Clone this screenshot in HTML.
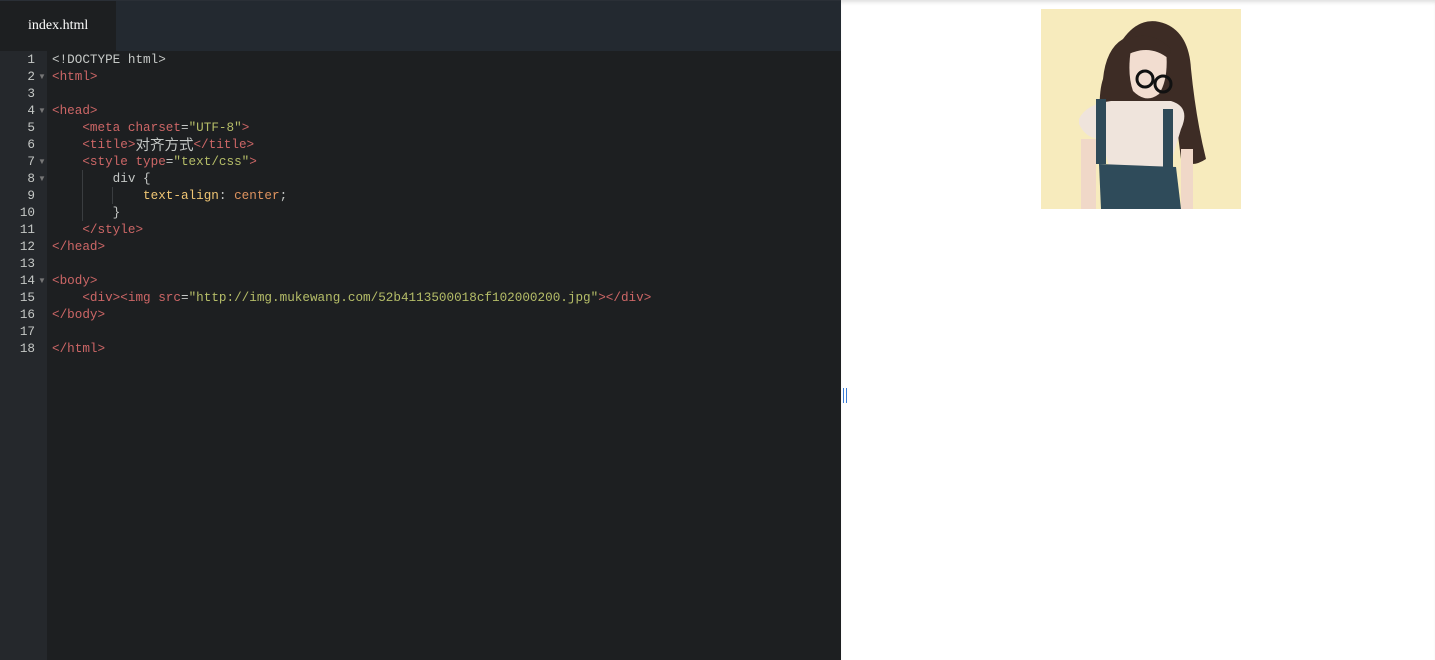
<!DOCTYPE html>
<html><head><meta charset="utf-8"><style>
*{margin:0;padding:0;box-sizing:border-box}
body{width:1435px;height:660px;overflow:hidden;background:#fff;position:relative;font-family:"Liberation Sans",sans-serif}
#ed{position:absolute;left:0;top:0;width:841px;height:660px;background:#1d1f21}
#tabs{position:absolute;left:0;top:0;width:841px;height:51px;background:#232930;border-top:1px solid #2a2f36}
#tab{position:absolute;left:0;top:0;width:116px;height:51px;background:#1d1f21;color:#fff;font-family:"Liberation Serif",serif;font-size:14px;line-height:50px;padding-left:28px}
#gut{position:absolute;left:0;top:51px;width:47px;height:609px;background:#25282c}
.code{position:absolute;top:51px;font-family:"Liberation Mono","Noto Sans CJK SC",monospace;font-size:12.65px;line-height:17px;padding-top:0px;white-space:pre}
#nums{left:0;width:35px;text-align:right;color:#c5c8c6}
#src{left:52px;color:#c5c8c6}
.cjk{font-family:"Noto Sans CJK SC",sans-serif;font-size:14.5px;display:inline-block;height:17px;line-height:17px;vertical-align:top;overflow:hidden}
.ar{position:absolute;left:38px;color:#777;font-size:8px}
.t{color:#cc6666}.a{color:#cc6666}.s{color:#b5bd68}.p{color:#f0c674}.v{color:#de935f}
.guide{position:absolute;width:1px;background:#3a3d40}
#pre{position:absolute;left:841px;top:0;width:594px;height:660px;background:#fff;box-shadow:inset 0 4px 4px -2px #ddd}
</style></head><body>
<div id="ed">
<div id="tabs"><div id="tab">index.html</div></div>
<div id="gut"></div>
<div class="code" id="nums" style="top:51px">1
2
3
4
5
6
7
8
9
10
11
12
13
14
15
16
17
18</div>
<span class="ar" style="top:72px">▼</span><span class="ar" style="top:106px">▼</span><span class="ar" style="top:157px">▼</span><span class="ar" style="top:174px">▼</span><span class="ar" style="top:276px">▼</span>
<div class="guide" style="left:82px;top:170px;height:51px"></div>
<div class="guide" style="left:112px;top:187px;height:17px"></div>
<div class="code" id="src">&lt;!DOCTYPE html&gt;
<span class="t">&lt;html&gt;</span>

<span class="t">&lt;head&gt;</span>
    <span class="t">&lt;meta</span> <span class="a">charset</span>=<span class="s">"UTF-8"</span><span class="t">&gt;</span>
    <span class="t">&lt;title&gt;</span><span class="cjk">对齐方式</span><span class="t">&lt;/title&gt;</span>
    <span class="t">&lt;style</span> <span class="a">type</span>=<span class="s">"text/css"</span><span class="t">&gt;</span>
        div {
            <span class="p">text-align</span>: <span class="v">center</span>;
        }
    <span class="t">&lt;/style&gt;</span>
<span class="t">&lt;/head&gt;</span>

<span class="t">&lt;body&gt;</span>
    <span class="t">&lt;div&gt;&lt;img</span> <span class="a">src</span>=<span class="s">"http://img.mukewang.com/52b4113500018cf102000200.jpg"</span><span class="t">&gt;&lt;/div&gt;</span>
<span class="t">&lt;/body&gt;</span>

<span class="t">&lt;/html&gt;</span></div>
</div>
<div id="pre">
<div style="position:absolute;left:2px;top:388px;width:1px;height:15px;background:#3a7bd5"></div>
<div style="position:absolute;left:5px;top:388px;width:1px;height:15px;background:#3a7bd5"></div>
<svg style="position:absolute;left:200px;top:9px" width="200" height="200" viewBox="0 0 200 200">
<rect width="200" height="200" fill="#f7ebbd"/>
<path d="M82 30 Q100 5 125 15 Q148 25 150 60 Q155 110 165 150 Q150 160 140 150 L135 110 L75 110 Q72 140 62 150 Q55 90 62 70 Q65 40 82 30Z" fill="#3d2c25"/>
<path d="M38 110 Q45 95 70 92 L130 92 Q150 98 140 120 L125 170 L72 170 L60 130 Q45 130 38 115Z" fill="#efe4dc"/>
<path d="M90 40 L125 40 Q128 70 118 85 Q105 95 92 82 Q86 65 90 40Z" fill="#f2ddd0"/>
<path d="M88 30 Q110 20 130 40 L128 50 Q110 35 88 45Z" fill="#3d2c25"/>
<rect x="55" y="90" width="10" height="65" fill="#2f4a58"/><rect x="122" y="100" width="10" height="60" fill="#2f4a58"/>
<path d="M58 155 L135 158 L140 200 L60 200Z" fill="#2f4b5a"/>
<circle cx="104" cy="70" r="8" fill="none" stroke="#111" stroke-width="3"/><circle cx="122" cy="75" r="8" fill="none" stroke="#111" stroke-width="3"/>
<rect x="40" y="130" width="15" height="70" fill="#f0d8c8"/><rect x="140" y="140" width="12" height="60" fill="#f0d8c8"/>
</svg>
</div>
</body></html>
